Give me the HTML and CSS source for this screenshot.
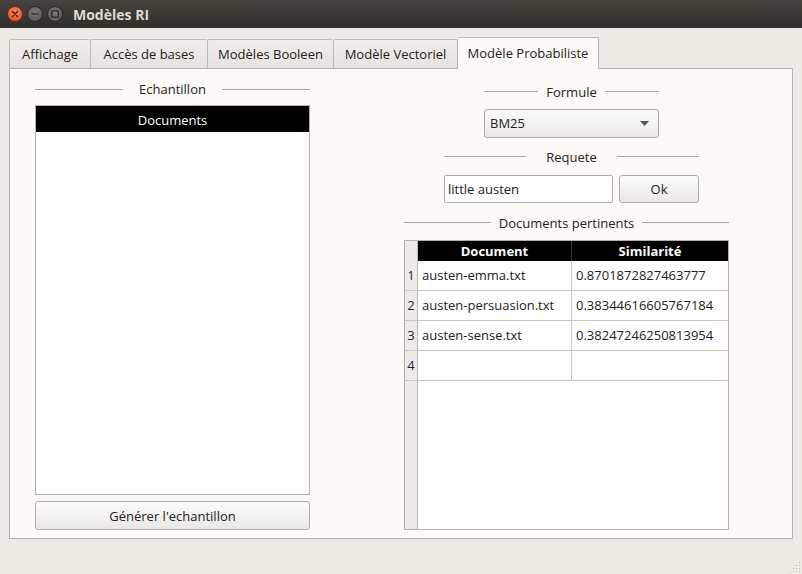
FILE: index.html
```html
<!DOCTYPE html>
<html lang="fr">
<head>
<meta charset="utf-8">
<title>Modèles RI</title>
<link rel="stylesheet" href="styles.css">
</head>
<body>
<div class="window">
  <div class="titlebar">
    <div class="wbtns">
      <span class="wbtn close"><svg width="16" height="16" viewBox="0 0 16 16"><path d="M5.5 5.5l5 5M10.5 5.5l-5 5" stroke="#3a1a10" stroke-width="1.3" stroke-linecap="round"/></svg></span>
      <span class="wbtn"><svg width="16" height="16" viewBox="0 0 16 16"><path d="M4.5 8h7" stroke="#2e2d2a" stroke-width="1.4"/></svg></span>
      <span class="wbtn"><svg width="16" height="16" viewBox="0 0 16 16"><rect x="4.8" y="4.8" width="6.4" height="6.4" fill="none" stroke="#2e2d2a" stroke-width="1.3"/></svg></span>
    </div>
    <div class="wtitle">Modèles RI</div>
  </div>

  <div class="content">
    <div class="tabs">
      <div class="tab t1">Affichage</div>
      <div class="tab t2">Accès de bases</div>
      <div class="tab t3">Modèles Booleen</div>
      <div class="tab t4">Modèle Vectoriel</div>
      <div class="tab t5 active">Modèle Probabiliste</div>
    </div>
    <div class="panel">
      <div class="leftcol">
        <div class="gtitle g-ech"><span class="line"></span><span class="gtext">Echantillon</span><span class="line"></span></div>
        <div class="listbox">
          <div class="listhead">Documents</div>
        </div>
        <div class="button genbtn">Générer l'echantillon</div>
      </div>
      <div class="rightcol">
        <div class="gtitle g-form"><span class="line"></span><span class="gtext">Formule</span><span class="line"></span></div>
        <div class="combo">
          <span>BM25</span>
          <svg width="9" height="5" viewBox="0 0 9 5"><path d="M0 0h9L4.5 5z" fill="#5a5855"/></svg>
        </div>
        <div class="gtitle g-req"><span class="line"></span><span class="gtext">Requete</span><span class="line"></span></div>
        <div class="reqrow">
          <div class="input">little austen</div>
          <div class="button okbtn">Ok</div>
        </div>
        <div class="gtitle g-docs"><span class="line"></span><span class="gtext">Documents pertinents</span><span class="line"></span></div>
        <div class="table">
          <div class="thead">
            <div class="corner"></div>
            <div class="th c1">Document</div>
            <div class="th c2">Similarité</div>
          </div>
          <div class="tbody">
            <div class="tr"><div class="rh">1</div><div class="td c1">austen-emma.txt</div><div class="td c2">0.8701872827463777</div></div>
            <div class="tr"><div class="rh">2</div><div class="td c1">austen-persuasion.txt</div><div class="td c2">0.38344616605767184</div></div>
            <div class="tr"><div class="rh">3</div><div class="td c1">austen-sense.txt</div><div class="td c2">0.38247246250813954</div></div>
            <div class="tr"><div class="rh">4</div><div class="td c1"></div><div class="td c2"></div></div>
            <div class="filler"><div class="rhfill"></div><div class="fill"></div></div>
          </div>
        </div>
      </div>
    </div>
  </div>
  <div class="grip">
    <svg width="12" height="12" viewBox="0 0 12 12" fill="#b8b4ae"><rect x="10" y="1" width="1" height="1"/><rect x="7" y="4" width="1" height="1"/><rect x="10" y="4" width="1" height="1"/><rect x="4" y="7" width="1" height="1"/><rect x="7" y="7" width="1" height="1"/><rect x="10" y="7" width="1" height="1"/><rect x="1" y="10" width="1" height="1"/><rect x="4" y="10" width="1" height="1"/><rect x="7" y="10" width="1" height="1"/><rect x="10" y="10" width="1" height="1"/></svg>
  </div>
</div>
</body>
</html>
```

FILE: styles.css
```css
* { box-sizing: border-box; }
html, body { margin: 0; padding: 0; }
body {
  width: 802px;
  height: 574px;
  overflow: hidden;
  font-family: "Open Sans", "Noto Sans", "DejaVu Sans", sans-serif;
  font-size: 13px;
  color: #222;
  background: #edeae6;
}
.window { position: relative; width: 802px; height: 574px; }

.titlebar {
  height: 28px;
  display: flex;
  align-items: center;
  background: linear-gradient(#45443f, #2f2e2a);
}
.wbtns { display: flex; gap: 4px; padding-left: 7px; }
.wbtn {
  width: 16px; height: 16px; border-radius: 50%;
  background: radial-gradient(circle at 50% 35%, #7a7974, #55544f);
  border: 1px solid #2a2926;
  display: flex; align-items: center; justify-content: center;
}
.wbtn svg { display: block; margin: -1px; }
.wbtn.close { background: radial-gradient(circle at 50% 35%, #f7865b, #e3491c); border-color: #6d2a14; }
.wtitle {
  margin-left: 10px;
  color: #dfdbd2;
  font-weight: bold;
  font-size: 14px;
}

.content { padding: 9px 9px 0 9px; }
.tabs { display: flex; align-items: flex-end; height: 31px; }
.tab {
  height: 29px;
  display: flex; align-items: center; justify-content: center;
  background: linear-gradient(#efecea, #e6e3df);
  border: 1px solid #bcb8b3;
  border-bottom: none;
  border-right: none;
  border-radius: 2px 2px 0 0;
  white-space: nowrap;
}
.t1 { width: 81px; }
.t2 { width: 117px; }
.t3 { width: 126px; }
.t4 { width: 125px; border-right: 1px solid #bcb8b3; }
.t5 { width: 141px; }
.tab.active {
  background: #fcf9f6;
  border-right: 1px solid #bcb8b3;
  border-left: none;
  padding-bottom: 2px;
  position: relative;
  z-index: 1;
  margin-bottom: -1px;
  height: 32px;
}
.panel {
  height: 471px;
  border: 1px solid #b5b1ac;
  background: #fcf9f6;
  display: flex;
  padding: 0 0 8px 25px;
}

.gtitle { display: flex; align-items: center; height: 20px; }
.gtitle .line { flex: 1; height: 1px; background: #a9a5a0; }
.gtext { white-space: nowrap; }
.g-ech .gtext { margin: 0 16px; }
.g-form .gtext { margin: 0 8px; }
.g-req .gtext { margin: 0 20px; }
.g-docs .gtext { margin: 0 8px; }

.leftcol { width: 275px; display: flex; flex-direction: column; }
.g-ech { margin-top: 10px; }
.listbox {
  margin-top: 6px;
  height: 390px;
  border: 1px solid #b2aea9;
  background: #fff;
}
.listhead {
  height: 26px;
  padding-top: 1px;
  background: #000;
  color: #fff;
  display: flex; align-items: center; justify-content: center;
}
.button {
  border: 1px solid #b0aca7;
  border-radius: 3px;
  background: linear-gradient(#fbfbfa, #e9e8e6);
  display: flex; align-items: center; justify-content: center;
}
.genbtn { margin-top: 6px; height: 29px; }

.rightcol {
  margin-left: 94px;
  width: 325px;
  display: flex; flex-direction: column;
}
.g-form { width: 175px; margin: 13px 0 0 80px; }
.combo {
  width: 175px; height: 29px; margin: 7px 0 0 80px;
  border: 1px solid #aeaaa5; border-radius: 3px;
  background: linear-gradient(#fbfbfa, #ebeae8);
  display: flex; align-items: center; justify-content: space-between;
  padding: 0 9px 0 5px;
}
.combo svg { display: block; }
.g-req { width: 255px; margin: 9px 0 0 40px; }
.reqrow { display: flex; margin: 8px 0 0 40px; height: 28px; }
.input {
  width: 169px; height: 28px;
  border: 1px solid #b0aca7; border-radius: 2px;
  background: #fff;
  display: flex; align-items: center; padding-left: 3px;
}
.okbtn { width: 80px; margin-left: 6px; height: 28px; }
.g-docs { margin-top: 10px; width: 325px; }

.table {
  margin-top: 7px;
  height: 291px;
  border: 1px solid #b3afaa;
  background: #fff;
  display: flex; flex-direction: column;
}
.thead { display: flex; height: 20px; }
.corner { width: 13px; background: #eeebe7; border-right: 1px solid #bdb9b4; }
.th {
  background: #000; color: #fff; font-weight: bold;
  display: flex; align-items: center; justify-content: center;
}
.th.c1 { border-right: 1px solid #3a3a3a; }
.c1 { width: 154px; }
.c2 { flex: 1; }
.tbody { flex: 1; display: flex; flex-direction: column; }
.tr { display: flex; height: 30px; border-bottom: 1px solid #c8c4bf; }
.rh {
  width: 13px; background: #eeebe7; border-right: 1px solid #bdb9b4;
  display: flex; align-items: center; justify-content: center;
  color: #1e2440;
}
.td { display: flex; align-items: center; padding-left: 4px; white-space: nowrap; }
.td.c1 { border-right: 1px solid #c8c4bf; }
.filler { flex: 1; display: flex; }
.rhfill { width: 13px; background: #eeebe7; border-right: 1px solid #bdb9b4; }
.fill { flex: 1; }

.grip { position: absolute; right: 1px; bottom: 1px; }
.grip svg { display: block; }
```
